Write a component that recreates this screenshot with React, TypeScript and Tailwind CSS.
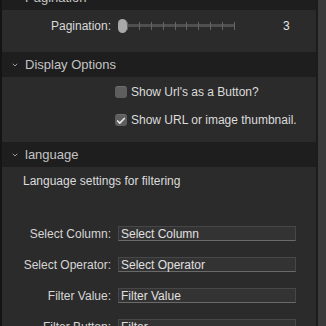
import { ChevronDown, Check } from "lucide-react";

const font = { fontFamily: '"Liberation Sans", Arial, sans-serif' };

function SectionHeader({ title, className = "" }: { title: string; className?: string }) {
  return (
    <div className={"shrink-0 flex items-center h-[25px] bg-[#1e1e1e] pl-[9px] gap-[6px] text-[13px] text-[#c4c4c4] " + className}>
      <ChevronDown className="w-[8px] h-[8px] text-[#9a9a9a]" strokeWidth={3} />
      <span>{title}</span>
    </div>
  );
}

function Checkbox({ checked, label }: { checked?: boolean; label: string }) {
  return (
    <div className="shrink-0 flex items-center h-[28px] pl-[113px] gap-[4px]">
      <div className="w-[12px] h-[12px] rounded-[3px] bg-[#5e5e5e] border-t border-[#6e6e6e] flex items-center justify-center">
        {checked && <Check className="w-[10px] h-[10px] text-[#e8e8e8]" strokeWidth={4} />}
      </div>
      <span className="text-[12px] text-[#dcdcdc]">{label}</span>
    </div>
  );
}

function FieldRow({ label, value }: { label: string; value: string }) {
  return (
    <div className="shrink-0 flex items-center h-[31px]">
      <div className="w-[109px] text-right text-[12px] text-[#d6d6d6]">{label}</div>
      <div className="ml-[7px] w-[178px] h-[15px] bg-[#333333] border border-[#474747] border-b-[#6a6a6a] flex items-center pl-[2px] text-[12px] leading-none text-[#e0e0e0]">
        {value}
      </div>
    </div>
  );
}

export default function App() {
  return (
    <div className="w-[326px] h-[326px] overflow-hidden flex bg-[#2b2b2b]" style={font}>
      <div className="w-[2px] shrink-0 bg-[#141414]" />
      <div className="w-[314px] shrink-0 flex flex-col">
        {/* Pagination */}
        <SectionHeader title="Pagination" className="mt-[-15px]" />
        <div className="shrink-0 h-[42px] flex items-center pb-[11px]">
          <div className="w-[109px] text-right text-[12px] font-medium text-[#dadada]">Pagination:</div>
          <div className="ml-[7px] relative w-[120px] h-[14px] flex items-center">
            <div className="absolute left-[4px] right-[3px] h-[3px] bg-[#4f4f4f]" />
            <div className="absolute left-[9px] right-[3px] flex justify-between">
              {Array.from({ length: 10 }).map((_, i) => (
                <div key={i} className="w-px h-[8px] bg-[#646464]" />
              ))}
            </div>
            <div className="absolute left-0 w-[9px] h-[14px] rounded-full bg-[#a8a8a8]" />
          </div>
          <div className="ml-[45px] text-[12px] text-[#e6e6e6]">3</div>
        </div>

        {/* Display Options */}
        <SectionHeader title="Display Options" />
        <div className="shrink-0 h-[65px] flex flex-col pt-[1px]">
          <Checkbox label="Show Url's as a Button?" />
          <Checkbox checked label="Show URL or image thumbnail." />
        </div>

        {/* language */}
        <SectionHeader title="language" className="h-[24px]" />
        <div className="shrink-0 flex flex-col">
          <div className="pl-[21px] pt-[5px] text-[12px] text-[#dcdcdc]">Language settings for filtering</div>
          <div className="flex flex-col mt-[28px]">
            <FieldRow label="Select Column:" value="Select Column" />
            <FieldRow label="Select Operator:" value="Select Operator" />
            <FieldRow label="Filter Value:" value="Filter Value" />
            <FieldRow label="Filter Button:" value="Filter" />
          </div>
        </div>
      </div>
      <div className="w-[2px] shrink-0 bg-[#1c1c1c]" />
      <div className="flex-1 bg-[#3a3a3a]" />
    </div>
  );
}
